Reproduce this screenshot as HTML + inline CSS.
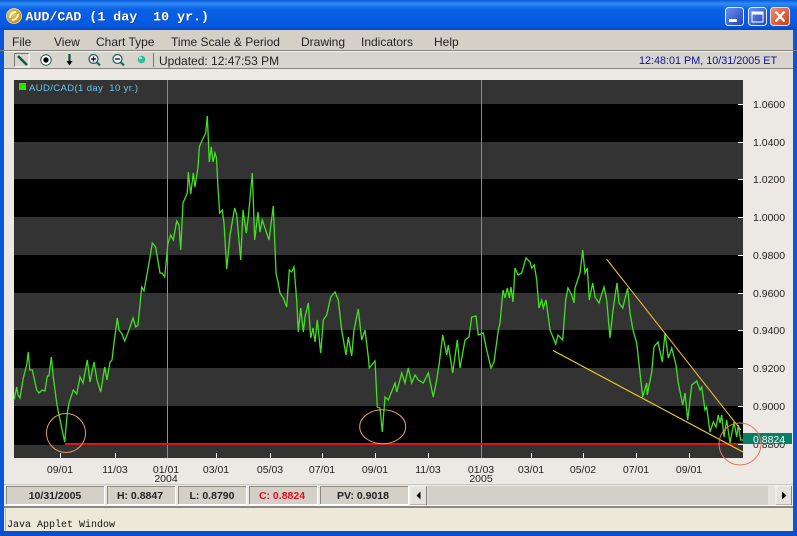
<!DOCTYPE html>
<html><head><meta charset="utf-8"><style>
html,body{margin:0;padding:0;background:#ece9e4;width:797px;height:536px;overflow:hidden}
svg{display:block;position:absolute;left:0;top:0}
text{font-family:"Liberation Sans",sans-serif;white-space:pre}
.m{font-size:12px;fill:#222}
.y{font-size:10.5px;fill:#222}
.x{font-size:10.5px;fill:#222;text-anchor:middle}
.s{font-size:10.5px;font-weight:bold;fill:#222;text-anchor:middle}
</style></head><body>
<svg width="797" height="536" viewBox="0 0 797 536" xmlns="http://www.w3.org/2000/svg">
<defs>
<linearGradient id="tb" x1="0" y1="0" x2="0" y2="1"><stop offset="0" stop-color="#0a5ad8"/><stop offset=".12" stop-color="#2f8cf5"/><stop offset=".3" stop-color="#0a62e6"/><stop offset=".85" stop-color="#0558e0"/><stop offset="1" stop-color="#0348c4"/></linearGradient>
<linearGradient id="bb" x1="0" y1="0" x2="1" y2="1"><stop offset="0" stop-color="#6f95ee"/><stop offset="1" stop-color="#1c3fc0"/></linearGradient>
<linearGradient id="rb" x1="0" y1="0" x2="1" y2="1"><stop offset="0" stop-color="#ee9070"/><stop offset="1" stop-color="#c83c12"/></linearGradient>
<radialGradient id="gd" cx=".4" cy=".35" r=".7"><stop offset="0" stop-color="#f4d060"/><stop offset="1" stop-color="#c08a10"/></radialGradient>
</defs>
<rect width="797" height="536" fill="#ece9e4"/>
<!-- frame -->
<rect x="0" y="0" width="797" height="30" fill="url(#tb)"/>
<rect x="0" y="30" width="4" height="506" fill="#0a55d8"/>
<rect x="793" y="30" width="4" height="506" fill="#0a55d8"/>
<rect x="0" y="531" width="797" height="5" fill="#0a4fd0"/>
<!-- title -->
<circle cx="14" cy="16" r="7.500" fill="url(#gd)" stroke="#e8e0c0" stroke-width=".8"/>
<path d="M10 18c0-4 3-6 6-6M18 14c0 4-3 6-6 6" stroke="#fff" stroke-width="1.600" fill="none"/>
<text x="26" y="21" style="font-family:'Liberation Mono',monospace;font-size:13.3px;font-weight:bold;fill:#0a2f90">AUD/CAD (1 day  10 yr.)</text>
<text x="25.500" y="20.500" style="font-family:'Liberation Mono',monospace;font-size:13.3px;font-weight:bold;fill:#fff">AUD/CAD (1 day  10 yr.)</text>
<!-- window buttons -->
<rect x="725.500" y="7.500" width="18" height="18" rx="3" fill="url(#bb)" stroke="#e4ecff"/>
<rect x="729" y="19" width="8" height="3" fill="#fff"/>
<rect x="748.500" y="7.500" width="18" height="18" rx="3" fill="url(#bb)" stroke="#e4ecff"/>
<rect x="752" y="12" width="11" height="10" fill="none" stroke="#fff"/><rect x="752" y="12" width="11" height="2.500" fill="#fff"/>
<rect x="770.500" y="7.500" width="19" height="18" rx="3" fill="url(#rb)" stroke="#f0e0d8"/>
<path d="M775.500 11.500l9 10M784.500 11.500l-9 10" stroke="#fff" stroke-width="2.200"/>
<!-- menu -->
<rect x="4" y="30" width="789" height="20" fill="#d4d0c8"/>
<rect x="0" y="50" width="797" height="1" fill="#85837e"/>
<rect x="4" y="51" width="789" height="1" fill="#f2f0ec"/>
<rect x="4" y="52" width="789" height="16" fill="#d8d5ce"/>
<rect x="4" y="68" width="789" height="1" fill="#85837e"/>
<text class="m" x="12" y="46">File</text>
<text class="m" x="54" y="46">View</text>
<text class="m" x="96" y="46">Chart Type</text>
<text class="m" x="171" y="46">Time Scale &amp; Period</text>
<text class="m" x="301" y="46">Drawing</text>
<text class="m" x="361" y="46">Indicators</text>
<text class="m" x="434" y="46">Help</text>
<!-- toolbar -->
<path d="M14.500 67V53.500H29" fill="none" stroke="#777"/><path d="M14.500 67H29V53.500" fill="none" stroke="#fff"/>
<path d="M18 56l9 9" stroke="#0d5a45" stroke-width="2.500"/>
<circle cx="46" cy="60" r="5.200" fill="#fff" stroke="#1a5a50" stroke-width="1"/><circle cx="46" cy="60" r="2.700" fill="#000"/>
<path d="M69.500 54v9" stroke="#0c5040" stroke-width="2.200"/><path d="M66.500 61h6l-3 4.500z" fill="#000"/>
<circle cx="93.500" cy="59" r="4.500" fill="#eef" stroke="#1b5f50" stroke-width="1.200"/><path d="M91 59h5M93.500 56.500v5" stroke="#000" stroke-width="1.200"/><path d="M97 62.500l3 3" stroke="#1b7060" stroke-width="2.200"/>
<circle cx="117.500" cy="59" r="4.500" fill="#eef" stroke="#1b5f50" stroke-width="1.200"/><path d="M115 59h5" stroke="#000" stroke-width="1.200"/><path d="M121 62.500l3 3" stroke="#1b7060" stroke-width="2.200"/>
<circle cx="141.500" cy="59.500" r="3.800" fill="#2fb89a"/><circle cx="140.500" cy="58" r="1.400" fill="#a8f0d8"/>
<rect x="153" y="53" width="1" height="14" fill="#777"/>
<text x="159" y="65" style="font-size:12px;fill:#222">Updated: 12:47:53 PM</text>
<text x="639" y="64" style="font-size:10.8px;fill:#10109c">12:48:01 PM, 10/31/2005 ET</text>
<!-- chart -->
<rect x="14" y="80" width="729" height="378" fill="#000"/>
<g fill="#333">
<rect x="14" y="80" width="729" height="24"/>
<rect x="14" y="142" width="729" height="37"/>
<rect x="14" y="217" width="729" height="38"/>
<rect x="14" y="293" width="729" height="37"/>
<rect x="14" y="368" width="729" height="38"/>
<rect x="14" y="445" width="729" height="13"/>
</g>
<rect x="167" y="80" width="1" height="378" fill="#8c8c8c"/>
<rect x="481" y="80" width="1" height="378" fill="#8c8c8c"/>
<rect x="19" y="83" width="7" height="7" fill="#2fe000"/>
<text x="29" y="91" textLength="109" style="font-size:9.500px;fill:#66c4e6">AUD/CAD(1 day  10 yr.)</text>
<rect x="65" y="443" width="678" height="2" fill="#d81818"/>
<polyline fill="none" stroke="#42e020" stroke-width="1.300" points="14,400 16.700,387 18,395 20,398 23.300,378 26.700,365 28.300,352 29.700,370 32.300,370 36.700,390 39,393 42.300,390 45,391 47.300,376 49,376 51.300,357 53.300,377 56.700,403 59,415 64.700,442 67.300,413 69,403 73.300,390 76.700,394 80,377 83,383 87.300,360 90,382 94,362 97,380 100.700,392 104.700,367 107,380 110,362 112,360 114,343 117.300,318 119,330 122,334 124.700,341 129,330 133,318 135.700,327 138,325 141.700,287 144,291 149,263 152.300,243 155.700,247 160,273 162,273 164.700,277 168,243 170.700,235 173.300,240 176.700,221 179,225 180.700,250 183,203 187.300,193 188.300,172 190.700,194 193.300,173 195,187 198,167 199.300,147 202.300,140 205.700,133 207.300,116 209.300,162 211.300,147 213,162 215,153 216.500,158 218,188 219.700,213 222.300,210 224,223 226.700,269 230,235 234.700,208 236.700,215 240.700,260 243,210 246.300,233 248.300,217 252.300,173 254.700,240 258,212 260,232 262.300,220 269,240 273.300,206 275,247 276,273 278,282 280,293 283.300,298 286.700,307 289.300,270 291.700,272 294,267 296.700,300 298.300,332 300.700,308 303.300,332 305,317 308.300,303 310.700,338 313,328 315,342 317.300,320 320.700,353 323.300,320 326.700,315 330.700,297 335,292 338.300,300 341.700,330 346,355 348.300,337 351.700,356 354,330 358.300,309 361.700,340 365,330 368.300,357 369.300,368 375,361 377.300,407 380,408 382.300,432 385,397 388.300,400 395,383 396.700,392 401.700,373 405,383 408.300,368 411.700,383 415,375 418.300,380 423.300,383 428.300,373 433.300,397 436.700,380 439.300,363 442.700,335 446.700,355 448.300,345 452.700,373 457.300,340 460,368 465,340 469,337 471.700,317 476,316 478.300,335 483.300,333 486,347 491,368 494,362 498.300,330 500,323 503,290 505,298 507.300,288 509.300,298 511,287 513,302 515,268 518,275 521.700,273 526,258 530,262 531.700,268 534.300,265 536.700,280 539,308 541.700,300 543.300,308 546,300 550,330 555.700,344 558,335 562.700,340 565.700,300 568,288 571.700,295 574,303 575,288 580,273 582.700,250 585,273 587.300,268 589.300,300 592.700,283 595,297 599,303 604,287 606.700,300 610,338 613,310 617,283 619,303 622.700,308 627.700,288 630,313 633,330 636.700,343 640,373 642.700,397 646.700,383 647.300,395 651.700,372 654,347 658,342 662.300,362 665,333 668.300,358 671.700,348 676,365 678.300,383 682.700,405 685,393 687.700,420 691.700,385 696.700,381 700,390 701.700,387 705,410 706.700,407 710,432 713.300,422 716,427 718.300,415 720,423 721.700,415 724,437 726.700,420 730,443 734,422 736.700,437 738.300,425 740.700,440 743,440"/>
<path d="M606.500 259L741 430" stroke="#e8b830" stroke-width="1.100" fill="none"/>
<path d="M553 350.500L743 452" stroke="#f0d020" stroke-width="1.100" fill="none"/>
<g fill="none" stroke="#e89a70" stroke-width="1">
<circle cx="66" cy="433" r="19.500"/>
<ellipse cx="382.700" cy="426.700" rx="23" ry="17"/>
</g>
<!-- axis ticks -->
<g fill="#fff">
<rect x="738" y="104" width="5" height="1"/><rect x="738" y="142" width="5" height="1"/><rect x="738" y="179" width="5" height="1"/><rect x="738" y="217" width="5" height="1"/><rect x="738" y="255" width="5" height="1"/><rect x="738" y="293" width="5" height="1"/><rect x="738" y="330" width="5" height="1"/><rect x="738" y="368" width="5" height="1"/><rect x="738" y="406" width="5" height="1"/><rect x="738" y="444" width="5" height="1"/>
<rect x="60" y="453" width="1" height="5"/><rect x="115" y="453" width="1" height="5"/><rect x="216" y="453" width="1" height="5"/><rect x="270" y="453" width="1" height="5"/><rect x="322" y="453" width="1" height="5"/><rect x="375" y="453" width="1" height="5"/><rect x="428" y="453" width="1" height="5"/><rect x="531" y="453" width="1" height="5"/><rect x="583" y="453" width="1" height="5"/><rect x="636" y="453" width="1" height="5"/><rect x="689" y="453" width="1" height="5"/>
</g>
<text class="y" x="753" y="108">1.0600</text>
<text class="y" x="753" y="146">1.0400</text>
<text class="y" x="753" y="183">1.0200</text>
<text class="y" x="753" y="221">1.0000</text>
<text class="y" x="753" y="259">0.9800</text>
<text class="y" x="753" y="297">0.9600</text>
<text class="y" x="753" y="334">0.9400</text>
<text class="y" x="753" y="372">0.9200</text>
<text class="y" x="753" y="410">0.9000</text>
<text class="y" x="753" y="448">0.8800</text>
<rect x="743" y="433" width="49" height="11" fill="#0a7f68"/>
<text x="753" y="443" style="font-size:10.500px;fill:#fff">0.8824</text>
<circle cx="740" cy="444" r="21" fill="none" stroke="#e8785a" stroke-width="1"/>
<!-- x labels -->
<text class="x" x="60" y="473">09/01</text>
<text class="x" x="115" y="473">11/03</text>
<text class="x" x="166" y="473">01/01</text>
<text class="x" x="166" y="482">2004</text>
<text class="x" x="216" y="473">03/01</text>
<text class="x" x="270" y="473">05/03</text>
<text class="x" x="322" y="473">07/01</text>
<text class="x" x="375" y="473">09/01</text>
<text class="x" x="428" y="473">11/03</text>
<text class="x" x="481" y="473">01/03</text>
<text class="x" x="481" y="482">2005</text>
<text class="x" x="531" y="473">03/01</text>
<text class="x" x="583" y="473">05/02</text>
<text class="x" x="636" y="473">07/01</text>
<text class="x" x="689" y="473">09/01</text>
<!-- status -->
<rect x="4" y="484" width="789" height="1" fill="#c8c6c0"/>
<g fill="#d4d0c8" stroke="#fff">
<rect x="6.500" y="486.500" width="98" height="18"/>
<rect x="107.500" y="486.500" width="68" height="18"/>
<rect x="178.500" y="486.500" width="68" height="18"/>
<rect x="249.500" y="486.500" width="68" height="18"/>
<rect x="320.500" y="486.500" width="88" height="18"/>
</g>
<g stroke="#8a8880" fill="none">
<path d="M6.500 504V486.500H104M107.500 504V486.500H175M178.500 504V486.500H246M249.500 504V486.500H317M320.500 504V486.500H408"/>
</g>
<text class="s" x="55" y="499">10/31/2005</text>
<text class="s" x="140" y="499">H: 0.8847</text>
<text class="s" x="212" y="499">L: 0.8790</text>
<text class="s" x="282" y="499" style="fill:#e01020">C: 0.8824</text>
<text class="s" x="363" y="499">PV: 0.9018</text>
<!-- scrollbar -->
<rect x="410" y="486" width="382" height="19" fill="#d2d0c8"/>
<rect x="410" y="486" width="17" height="19" fill="#e4e2da" stroke="#fff" stroke-width=".6"/>
<path d="M426.500 486v19H410" stroke="#888" fill="none"/>
<path d="M420.500 491.500v8l-4-4z" fill="#000"/>
<rect x="768" y="486" width="8" height="19" fill="#e4e2da"/>
<rect x="776" y="486" width="16" height="19" fill="#e4e2da" stroke="#fff" stroke-width=".6"/>
<path d="M791.500 486v19H776" stroke="#888" fill="none"/>
<path d="M782 491.500v8l4.500-4z" fill="#000"/>
<rect x="4" y="505" width="789" height="1" fill="#fafafa"/>
<rect x="4" y="506" width="789" height="2" fill="#8a8880"/>
<rect x="4" y="508" width="789" height="23" fill="#ece9d8"/>
<rect x="5" y="508" width="1" height="23" fill="#b8b6a8"/>
<text x="7" y="527" style="font-family:'Liberation Mono',monospace;font-size:10px;fill:#111">Java Applet Window</text>
</svg>
</body></html>
